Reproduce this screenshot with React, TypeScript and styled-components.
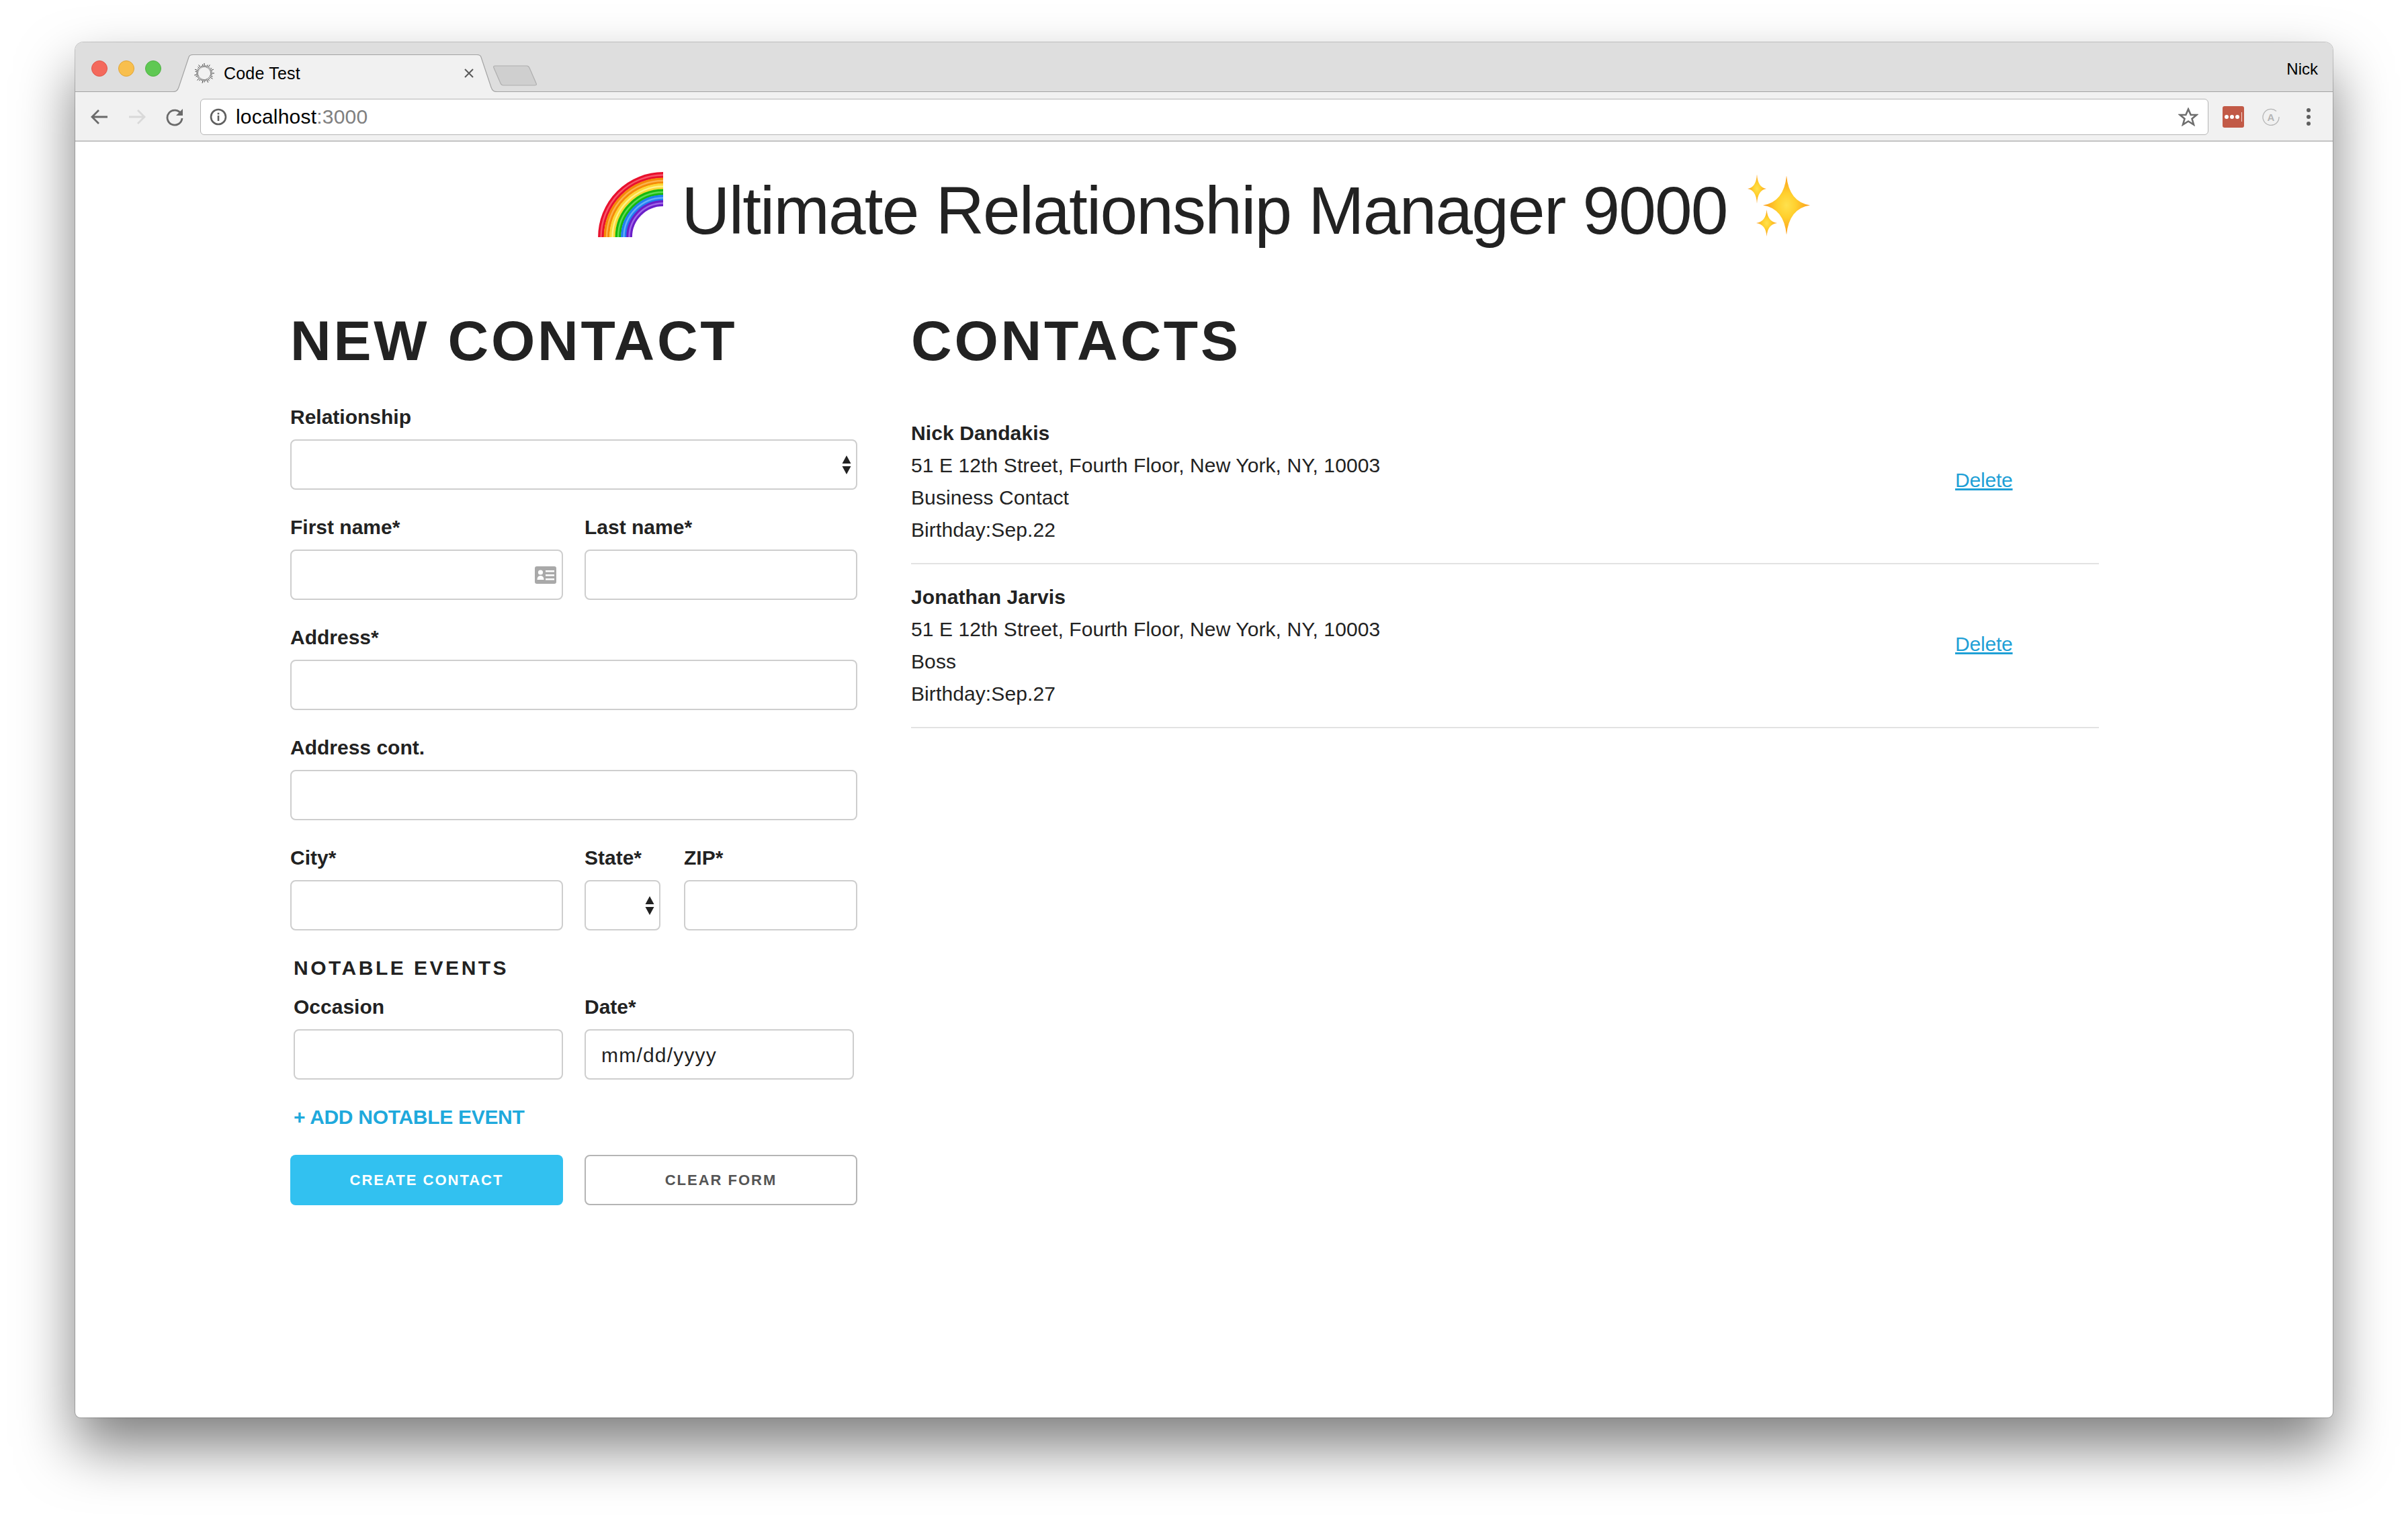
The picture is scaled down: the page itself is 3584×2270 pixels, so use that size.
import styled, {createGlobalStyle} from 'styled-components';

const GlobalStyle = createGlobalStyle`
	html, body {
		margin: 0;
		padding: 0;
		background: #fff;
	}
	body {
		font-family: "Liberation Sans", Arial, sans-serif;
		color: #222;
	}
`;

const contacts = [
	{
		name: 'Nick Dandakis',
		address: '51 E 12th Street, Fourth Floor, New York, NY, 10003',
		relationship: 'Business Contact',
		birthday: 'Birthday:Sep.22',
	},
	{
		name: 'Jonathan Jarvis',
		address: '51 E 12th Street, Fourth Floor, New York, NY, 10003',
		relationship: 'Boss',
		birthday: 'Birthday:Sep.27',
	},
];

const rainbowBands = [
	{r: 92.5, color: '#e8112d', light: '#f8566a'},
	{r: 84, color: '#f58a07', light: '#fbb24e'},
	{r: 75.5, color: '#fdd835', light: '#fff08a'},
	{r: 67, color: '#17b80e', light: '#5fdc55'},
	{r: 58.5, color: '#1f7ff0', light: '#66adfa'},
	{r: 50.5, color: '#6a1fc9', light: '#a066e8'},
];

const Spinner = () => (
	<svg width="30" height="30" viewBox="-15 -15 30 30">
		{Array.from({length: 32}).map((_, i) => {
			const a = (i / 32) * Math.PI * 2;
			const outer = i % 3 === 0 ? 15 : i % 3 === 1 ? 12 : 13.5;
			return (
				<line
					key={i}
					x1={Math.cos(a) * 9}
					y1={Math.sin(a) * 9}
					x2={Math.cos(a) * outer}
					y2={Math.sin(a) * outer}
					stroke="#2e2e2e"
					strokeWidth="0.9"
				/>
			);
		})}
	</svg>
);

const Rainbow = () => (
	<RainbowSvg viewBox="0 0 97 97" width="97" height="97">
		{rainbowBands.map(b => (
			<g key={b.r} fill="none">
				<path d={`M${97 - b.r} 97A${b.r} ${b.r} 0 0 1 97 ${97 - b.r}`} stroke={b.color} strokeWidth="8.8" />
				<path d={`M${97 - b.r} 97A${b.r} ${b.r} 0 0 1 97 ${97 - b.r}`} stroke={b.light} strokeWidth="2.4" />
			</g>
		))}
	</RainbowSvg>
);

const star = (cx: number, cy: number, rx: number, ry: number, k: number) =>
	`M${cx} ${cy - ry}Q${cx + rx * k} ${cy - ry * k} ${cx + rx} ${cy}Q${cx + rx * k} ${cy + ry * k} ${cx} ${cy + ry}Q${cx - rx * k} ${cy + ry * k} ${cx - rx} ${cy}Q${cx - rx * k} ${cy - ry * k} ${cx} ${cy - ry}Z`;

const Sparkles = () => (
	<SparkleSvg viewBox="0 0 93 92" width="93" height="92">
		<defs>
			<radialGradient id="spark">
				<stop offset="0" stopColor="#ffe14d" />
				<stop offset="0.4" stopColor="#ffd02e" />
				<stop offset="1" stopColor="#fb9a1c" />
			</radialGradient>
		</defs>
		<path d={star(14, 21, 14, 22, 0.08)} fill="url(#spark)" />
		<path d={star(28.5, 72, 15.5, 20, 0.09)} fill="url(#spark)" />
		<path d={star(58, 45.5, 35, 44, 0.11)} fill="url(#spark)" />
	</SparkleSvg>
);

const SelectArrows = () => (
	<ArrowsSvg width="14" height="28" viewBox="0 0 14 28">
		<path d="M7 0L13.500 12H.5Z M.5 16H13.500L7 28Z" fill="#222" />
	</ArrowsSvg>
);

const CardIcon = () => (
	<CardSvg width="32" height="26" viewBox="0 0 32 26">
		<rect width="32" height="26" rx="3" fill="#a9a9a9" />
		<circle cx="8.5" cy="9" r="3.6" fill="#fff" />
		<path d="M3.5 20c0-4 2-6 5-6s5 2 5 6z" fill="#fff" />
		<path d="M16 6h13v2.5H16zM16 12h13v2.5H16zM16 18h13v2.5H16z" fill="#fff" />
	</CardSvg>
);

const App = () => (
	<Page>
		<GlobalStyle />
		<Window>
			<TabStrip>
				<Lights>
					<Light $color="#f4695c" $edge="#e0574b" />
					<Light $color="#f8bf4d" $edge="#e0a63a" />
					<Light $color="#5fc853" $edge="#4fb244" />
				</Lights>
				<Tab>
					<TabShape viewBox="0 0 483 56" width="483" height="56" preserveAspectRatio="none">
						<path d="M0 56C4 56 7 55 9 49L24 4C25 1 27 0 30 0H453C456 0 458 1 459 4L474 49C476 55 479 56 483 56Z" fill="#f1f1f1" />
						<path d="M0 55.5C4 55.5 7 55 9 49L24 4C25 1 27 .5 30 .5H453C456 .5 458 1 459 4L474 49C476 55 479 55.5 483 55.5" fill="none" stroke="#a3a3a3" strokeWidth="1.2" />
					</TabShape>
					<Spinner />
					<TabTitle>Code Test</TabTitle>
					<TabClose width="16" height="16" viewBox="0 0 16 16">
						<path d="M2 2L14 14M14 2L2 14" stroke="#5a5a5a" strokeWidth="2" />
					</TabClose>
				</Tab>
				<NewTab width="65" height="31" viewBox="0 0 65 31">
					<path d="M3 1H50C52 1 53 2 54 4L64 27C65 29 64 30 62 30H15C13 30 12 29 11 27L1 4C0 2 1 1 3 1Z" fill="#cfcfcf" stroke="#aeaeae" strokeWidth="1.2" />
				</NewTab>
				<Profile>Nick</Profile>
			</TabStrip>
			<Toolbar>
				<NavIcon width="28" height="28" viewBox="0 0 28 28">
					<path d="M26 14H3M13 4L3 14L13 24" fill="none" stroke="#6a6a6a" strokeWidth="2.8" />
				</NavIcon>
				<NavIcon width="28" height="28" viewBox="0 0 28 28">
					<path d="M2 14H25M15 4L25 14L15 24" fill="none" stroke="#d9d9d9" strokeWidth="2.8" />
				</NavIcon>
				<NavIcon width="28" height="28" viewBox="0 0 28 28">
					<path d="M23.5 9.5A11 11 0 1 0 25 16" fill="none" stroke="#6a6a6a" strokeWidth="2.8" />
					<path d="M26 2V12H16Z" fill="#6a6a6a" />
				</NavIcon>
				<Omnibox>
					<svg width="26" height="26" viewBox="0 0 26 26">
						<circle cx="13" cy="13" r="11" fill="none" stroke="#5f5f5f" strokeWidth="2.6" />
						<rect x="11.7" y="11" width="2.6" height="8" fill="#5f5f5f" />
						<rect x="11.7" y="6.8" width="2.6" height="2.6" fill="#5f5f5f" />
					</svg>
					<Url>
						localhost<UrlPort>:3000</UrlPort>
					</Url>
					<StarIcon width="30" height="28" viewBox="0 0 30 28">
						<path d="M15 2.500L18.700 11H27.500L20.500 16.800L23 25.500L15 20.500L7 25.500L9.500 16.800L2.500 11H11.300Z" fill="none" stroke="#6e6e6e" strokeWidth="2.600" />
					</StarIcon>
				</Omnibox>
				<Extensions>
					<LastPass>
						<LastPassDot />
						<LastPassDot />
						<LastPassDot />
						<LastPassBar />
					</LastPass>
					<svg width="26" height="26" viewBox="0 0 26 26">
						<path d="M21 4.500A12 12 0 1 0 25 13" fill="none" stroke="#b5b5b5" strokeWidth="1.300" />
						<AutoLetter x="13" y="18.500" textAnchor="middle">A</AutoLetter>
					</svg>
					<Kebab>
						<KebabDot />
						<KebabDot />
						<KebabDot />
					</Kebab>
				</Extensions>
			</Toolbar>
			<Content>
				<Title>
					<Rainbow />
					<TitleText>Ultimate Relationship Manager 9000</TitleText>
					<Sparkles />
				</Title>
				<Columns>
					<section>
						<Heading>NEW CONTACT</Heading>
						<Form>
							<Field>
								<Label>Relationship</Label>
								<SelectWrap>
									<Select defaultValue="">
										<option value="" />
									</Select>
									<SelectArrows />
								</SelectWrap>
							</Field>
							<TwoCols>
								<Field>
									<Label>First name*</Label>
									<InputWrap>
										<Input />
										<CardIcon />
									</InputWrap>
								</Field>
								<Field>
									<Label>Last name*</Label>
									<Input />
								</Field>
							</TwoCols>
							<Field>
								<Label>Address*</Label>
								<Input />
							</Field>
							<Field>
								<Label>Address cont.</Label>
								<Input />
							</Field>
							<TwoCols>
								<Field>
									<Label>City*</Label>
									<Input />
								</Field>
								<StateZip>
									<StateField>
										<Label>State*</Label>
										<SelectWrap>
											<Select defaultValue="">
												<option value="" />
											</Select>
											<SelectArrows />
										</SelectWrap>
									</StateField>
									<ZipField>
										<Label>ZIP*</Label>
										<Input />
									</ZipField>
								</StateZip>
							</TwoCols>
							<Notable>
								<NotableTitle>NOTABLE EVENTS</NotableTitle>
								<EventCols>
									<Field>
										<Label>Occasion</Label>
										<Input />
									</Field>
									<Field>
										<Label>Date*</Label>
										<DateInput defaultValue="mm/dd/yyyy" />
									</Field>
								</EventCols>
							</Notable>
							<AddEvent>+ ADD NOTABLE EVENT</AddEvent>
							<TwoCols>
								<PrimaryButton>CREATE CONTACT</PrimaryButton>
								<SecondaryButton>CLEAR FORM</SecondaryButton>
							</TwoCols>
						</Form>
					</section>
					<section>
						<Heading>CONTACTS</Heading>
						<ContactList>
							{contacts.map(c => (
								<ContactRow key={c.name}>
									<div>
										<ContactName>{c.name}</ContactName>
										<ContactLine>{c.address}</ContactLine>
										<ContactLine>{c.relationship}</ContactLine>
										<ContactLine>{c.birthday}</ContactLine>
									</div>
									<DeleteLink href="#">Delete</DeleteLink>
								</ContactRow>
							))}
						</ContactList>
					</section>
				</Columns>
			</Content>
		</Window>
	</Page>
);

export default App;

const Page = styled('div')`
	box-sizing: border-box;
	width: 3584px;
	height: 2270px;
	padding: 63px 112px 160px;
	overflow: hidden;
	background: #fff;
`;

const Window = styled('div')`
	display: flex;
	flex-direction: column;
	height: 2047px;
	border-radius: 12px 12px 8px 8px;
	background: #fff;
	box-shadow:
		0 0 0 1px rgba(0, 0, 0, 0.2),
		0 44px 84px rgba(0, 0, 0, 0.5);
`;

const TabStrip = styled('div')`
	display: flex;
	align-items: flex-end;
	box-sizing: border-box;
	height: 74px;
	padding-right: 22px;
	border-radius: 12px 12px 0 0;
	border-bottom: 1px solid #a3a3a3;
	background: #dedede;
`;

const Lights = styled('div')`
	display: flex;
	align-self: flex-start;
	gap: 16px;
	box-sizing: border-box;
	width: 145px;
	padding: 27px 0 0 24px;
`;

const Light = styled('span')<{$color: string; $edge: string}>`
	box-sizing: border-box;
	width: 24px;
	height: 24px;
	border-radius: 50%;
	border: 1px solid ${p => p.$edge};
	background: ${p => p.$color};
`;

const Tab = styled('div')`
	position: relative;
	display: flex;
	align-items: center;
	box-sizing: border-box;
	width: 483px;
	height: 56px;
	margin-bottom: -1px;
	padding: 0 34px 0 32px;

	> svg:not(:first-child) {
		position: relative;
		flex: none;
	}
`;

const TabShape = styled('svg')`
	position: absolute;
	top: 0;
	left: 0;
`;

const TabTitle = styled('span')`
	position: relative;
	flex: 1;
	margin-left: 14px;
	font-size: 25px;
	letter-spacing: 0.2px;
	color: #000;
`;

const TabClose = styled('svg')``;

const NewTab = styled('svg')`
	align-self: flex-start;
	flex: none;
	margin: 34px 0 0 -6px;
`;

const Profile = styled('div')`
	align-self: flex-start;
	margin: 26px 0 0 auto;
	font-size: 24px;
	line-height: 28px;
	color: #000;
`;

const Toolbar = styled('div')`
	display: flex;
	align-items: center;
	box-sizing: border-box;
	height: 74px;
	padding: 2px 33px 0 22px;
	border-bottom: 2px solid #c4c4c4;
	background: #f1f1f1;
`;

const NavIcon = styled('svg')`
	flex: none;
	margin-right: 28px;
`;

const Omnibox = styled('div')`
	display: flex;
	align-items: center;
	box-sizing: border-box;
	flex: 1;
	height: 54px;
	margin-left: -4px;
	padding: 0 14px 0 13px;
	border: 1px solid #b5b5b5;
	border-radius: 6px;
	background: #fff;
`;

const Url = styled('div')`
	flex: 1;
	margin-left: 13px;
	font-size: 30px;
	letter-spacing: 0.2px;
	color: #000;
`;

const UrlPort = styled('span')`
	color: #808080;
`;

const StarIcon = styled('svg')`
	flex: none;
`;

const Extensions = styled('div')`
	display: flex;
	align-items: center;
	gap: 27px;
	margin-left: 21px;
`;

const LastPass = styled('div')`
	display: flex;
	align-items: center;
	justify-content: center;
	gap: 2px;
	width: 32px;
	height: 32px;
	border-radius: 3px;
	background: #c25a47;
`;

const LastPassDot = styled('span')`
	width: 6px;
	height: 6px;
	border-radius: 50%;
	background: #fff;
`;

const LastPassBar = styled('span')`
	width: 1.500px;
	height: 14px;
	margin-left: 1px;
	background: #f3d3cc;
`;

const AutoLetter = styled('text')`
	font-size: 15px;
	font-weight: 700;
	fill: #b5b5b5;
`;

const Kebab = styled('div')`
	display: flex;
	flex-direction: column;
	gap: 4px;
	margin-left: 13px;
`;

const KebabDot = styled('span')`
	width: 6px;
	height: 6px;
	border-radius: 50%;
	background: #5f5f5f;
`;

const Content = styled('main')`
	flex: 1;
	padding: 52px 348px 0 320px;
`;

const Title = styled('div')`
	display: flex;
	align-items: flex-start;
	justify-content: center;
	gap: 27px;
	margin: 0 -348px 0 -320px;
`;

const RainbowSvg = styled('svg')`
	flex: none;
	margin-top: -7px;
`;

const SparkleSvg = styled('svg')`
	flex: none;
	margin-top: -3px;
`;

const TitleText = styled('h1')`
	margin: 0 3px 0 0;
	font-size: 100px;
	line-height: 100px;
	font-weight: 400;
	letter-spacing: -1.800px;
	white-space: nowrap;
	color: #222;
`;

const Columns = styled('div')`
	display: grid;
	grid-template-columns: 844px 1768px;
	column-gap: 80px;
	margin-top: 100px;
`;

const Heading = styled('h2')`
	margin: 0;
	font-size: 84px;
	line-height: 88px;
	font-weight: 700;
	letter-spacing: 3.800px;
	white-space: nowrap;
	color: #222;
`;

const Form = styled('form')`
	display: flex;
	flex-direction: column;
	gap: 38px;
	margin-top: 52px;
`;

const Field = styled('div')`
	display: flex;
	flex-direction: column;
	min-width: 0;
`;

const Label = styled('label')`
	margin-bottom: 15px;
	font-size: 30px;
	line-height: 36px;
	font-weight: 700;
	color: #222;
`;

const Input = styled('input')`
	box-sizing: border-box;
	width: 100%;
	height: 75px;
	padding: 0 23px;
	border: 2px solid #cecece;
	border-radius: 8px;
	outline: none;
	background: #fff;
	font-family: inherit;
	font-size: 30px;
	color: #222;
`;

const DateInput = styled(Input)`
	padding-top: 3px;
	letter-spacing: 1.200px;
`;

const Select = styled('select')`
	appearance: none;
	box-sizing: border-box;
	width: 100%;
	height: 75px;
	border: 2px solid #cecece;
	border-radius: 8px;
	outline: none;
	background: #fff;
`;

const SelectWrap = styled('div')`
	position: relative;
`;

const InputWrap = styled('div')`
	position: relative;
`;

const ArrowsSvg = styled('svg')`
	position: absolute;
	top: 24px;
	right: 9px;
`;

const CardSvg = styled('svg')`
	position: absolute;
	top: 25px;
	right: 10px;
`;

const TwoCols = styled('div')`
	display: grid;
	grid-template-columns: 406px 406px;
	column-gap: 32px;
`;

const StateZip = styled('div')`
	display: flex;
	justify-content: space-between;
`;

const StateField = styled(Field)`
	width: 113px;
`;

const ZipField = styled(Field)`
	width: 258px;
`;

const Notable = styled('div')`
	padding: 0 5px;
`;

const NotableTitle = styled('h3')`
	margin: 0 0 22px;
	font-size: 30px;
	line-height: 36px;
	font-weight: 700;
	letter-spacing: 3.500px;
	color: #222;
`;

const EventCols = styled('div')`
	display: grid;
	grid-template-columns: 401px 401px;
	column-gap: 32px;
`;

const AddEvent = styled('a')`
	padding-left: 5px;
	font-size: 30px;
	line-height: 36px;
	font-weight: 700;
	letter-spacing: -0.300px;
	color: #1fa9dc;
`;

const PrimaryButton = styled('button')`
	box-sizing: border-box;
	height: 75px;
	border: 0;
	border-radius: 8px;
	background: #32c1f0;
	font-family: inherit;
	font-size: 22px;
	font-weight: 700;
	letter-spacing: 2px;
	color: #fff;
`;

const SecondaryButton = styled('button')`
	box-sizing: border-box;
	height: 75px;
	border: 2px solid #b5b5b5;
	border-radius: 8px;
	background: #fff;
	font-family: inherit;
	font-size: 22px;
	font-weight: 700;
	letter-spacing: 2px;
	color: #555;
`;

const ContactList = styled('div')`
	margin-top: 70px;
`;

const ContactRow = styled('div')`
	display: grid;
	grid-template-columns: 1554px auto;
	align-items: center;
	margin-bottom: 25px;
	padding-bottom: 25px;
	border-bottom: 2px solid #e2e2e2;
`;

const ContactName = styled('div')`
	font-size: 30px;
	line-height: 48px;
	font-weight: 700;
	letter-spacing: 0.100px;
	color: #222;
`;

const ContactLine = styled('div')`
	font-size: 30px;
	line-height: 48px;
	letter-spacing: 0.100px;
	color: #222;
`;

const DeleteLink = styled('a')`
	justify-self: start;
	margin-top: -4px;
	font-size: 30px;
	line-height: 36px;
	letter-spacing: -0.200px;
	color: #1fa0d6;
`;
